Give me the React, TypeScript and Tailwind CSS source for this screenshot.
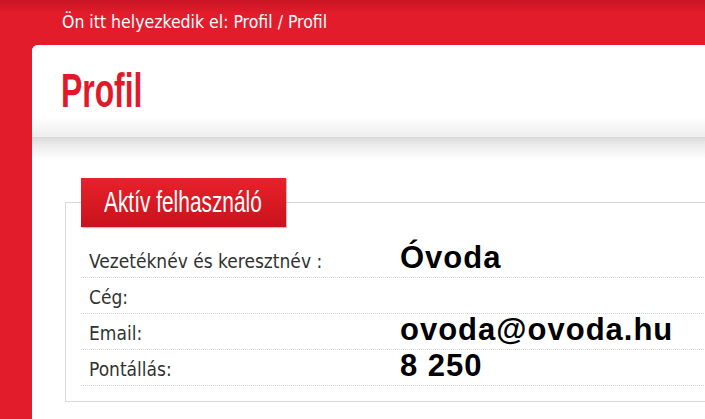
// Profil oldal - breadcrumb, fejléc, aktív felhasználó adatai
import React from 'react';

interface ProfileRow {
  label: string;
  value: string;
}

const rows: ProfileRow[] = [
  { label: 'Vezetéknév és keresztnév :', value: 'Óvoda' },
  { label: 'Cég:', value: '' },
  { label: 'Email:', value: 'ovoda@ovoda.hu' },
  { label: 'Pontállás:', value: '8 250' },
];

const labelFont = { fontFamily: '"DejaVu Sans Condensed", "DejaVu Sans", sans-serif' };

const App: React.FC = () => {
  return (
    <div className="w-[705px] h-[419px] overflow-hidden bg-[#e31c2c] bg-gradient-to-b from-[#c81624] to-[#e31c2c] to-[14px]">
      {/* breadcrumb */}
      <div className="h-[45px] pl-[62px] pt-[14px] text-[17.5px] leading-4 text-white" style={labelFont}>
        Ön itt helyezkedik el: Profil / Profil
      </div>

      <div className="ml-[32px] w-[720px] h-[400px] bg-white rounded-tl-[6px]">
        {/* page title */}
        <div className="h-[92px] pl-[29px] pt-[21px] rounded-tl-[6px] bg-gradient-to-b from-white from-[78%] to-[#eeeeee]">
          <h1
            className="inline-block origin-left scale-x-[0.65] text-[49px] leading-[49px] font-bold text-[#e0192b] whitespace-nowrap"
            style={{ fontFamily: '"Liberation Sans", Arial, sans-serif' }}
          >
            Profil
          </h1>
        </div>
        <div className="h-[23px] bg-gradient-to-b from-[#d9d9d9] via-[#ececec] via-[35%] to-white" />

        {/* active user box */}
        <fieldset className="ml-[33px] mt-[18px] border border-[#d8d8d8] px-[15px] pb-[15px]">
          <legend className="block h-[49px] w-[205px] pl-[23px] pt-[10px] leading-none bg-gradient-to-b from-[#e8212a] to-[#c9121c] shadow-[1px_1px_1px_rgba(0,0,0,0.25)]">
            <span
              className="inline-block origin-left scale-x-[0.72] text-[29px] leading-[29px] text-white whitespace-nowrap"
              style={{ fontFamily: '"Liberation Sans", Arial, sans-serif' }}
            >
              Aktív felhasználó
            </span>
          </legend>

          <div className="mt-[15px]">
            {rows.map((row) => (
              <div
                key={row.label}
                className="flex items-baseline h-[36px] pl-2 border-b border-dotted border-[#d4d4d4]"
              >
                <span className="w-[311px] shrink-0 text-[19px] leading-[19px] text-[#333333]" style={labelFont}>
                  {row.label}
                </span>
                <span
                  className="text-[31px] leading-[31px] font-bold tracking-[1px] text-black whitespace-nowrap"
                  style={{ fontFamily: '"Liberation Sans", Arial, sans-serif' }}
                >
                  {row.value || '\u00A0'}
                </span>
              </div>
            ))}
          </div>
        </fieldset>
      </div>
    </div>
  );
};

export default App;
